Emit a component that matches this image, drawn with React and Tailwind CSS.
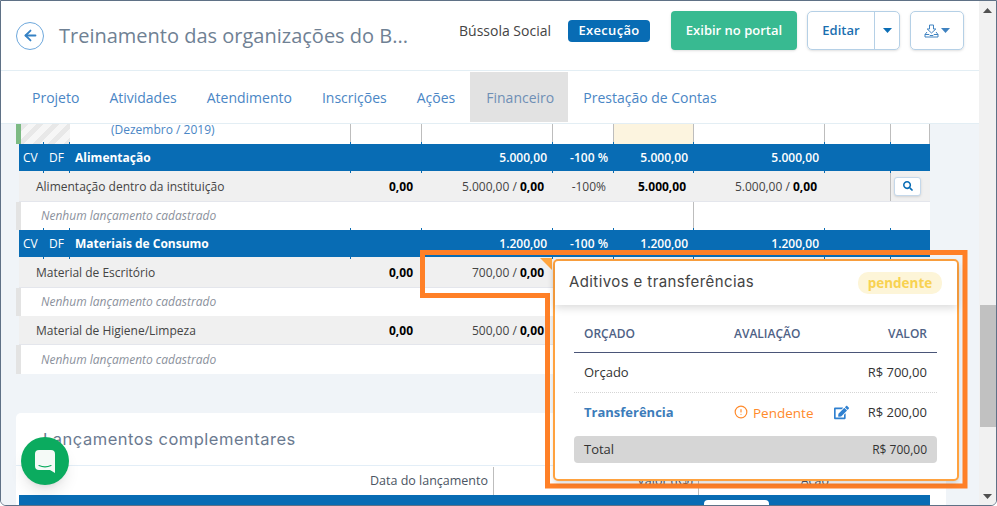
import { ArrowLeft, CircleAlert } from "lucide-react";
import { FaSearch, FaEdit } from "react-icons/fa";

const cols = "grid grid-cols-[24px_26px_281px_71px_131px_61px_80px_131px_66px_40px]";
const montserrat = "font-['Inter','Noto_Sans',sans-serif]";

const tabs = ["Projeto", "Atividades", "Atendimento", "Inscrições", "Ações", "Financeiro", "Prestação de Contas"];
const ticks = [24, 50, 331, 402, 533, 594, 674, 805, 871];

function Caret({ className }) {
  return (
    <svg width="9" height="5" viewBox="0 0 9 5" className={className}>
      <path d="M0 0h9L4.5 5z" fill="currentColor" />
    </svg>
  );
}

function GroupRow({ name, vals }) {
  return (
    <div className="relative z-[1] pl-[3px]">
      <div className={`${cols} relative h-[27px] items-center bg-[#086cb4] text-xs text-white`}>
        <span className="pl-[4px]">CV</span>
        <span className="pl-[6px]">DF</span>
        <span className="pl-[6px] font-bold">{name}</span>
        <span />
        <span className="pr-[5px] text-right font-semibold">{vals}</span>
        <span className="pr-[5px] text-right font-semibold">-100 %</span>
        <span className="pr-[5px] text-right font-semibold">{vals}</span>
        <span className="pr-[5px] text-right font-semibold">{vals}</span>
        <span />
        <span />
        {ticks.map((x) => (
          <span key={x} className="absolute -top-[2px] h-[31px] w-px bg-[#086cb4]" style={{ left: x }} />
        ))}
      </div>
    </div>
  );
}

function DataRow({ name, value, total, search, h = "h-[31px]" }) {
  return (
    <div className="pl-[3px]">
      <div className={`${cols} ${h} items-center bg-[#f0f0f0] text-xs text-[#444] border-b border-[#e4e6ec]`}>
        <span className="col-span-3 pl-[17px] pt-[1px]">{name}</span>
        <span className="pr-[8px] pt-[1px] text-right font-bold text-black">0,00</span>
        <span className="pr-[8px] pt-[1px] text-right">
          {value} / <b className="text-black">0,00</b>
        </span>
        <span className="pr-[7px] pt-[1px] text-right">-100%</span>
        <span className="pr-[7px] pt-[1px] text-right font-bold text-black">{total}</span>
        <span className="pr-[7px] pt-[1px] text-right">
          {value} / <b className="text-black">0,00</b>
        </span>
        <span />
        <span className="flex h-full items-center border-l border-[#bdbdbd] pl-[3px]">
          {search && (
            <span className="flex h-[19px] w-[27px] items-center justify-center rounded-[3px] border border-[#c5d8ea] bg-white text-[#0a6db5] shadow-sm">
              <FaSearch size={10} />
            </span>
          )}
        </span>
      </div>
    </div>
  );
}

function EmptyRow({ line, h = "h-[28px]" }) {
  return (
    <div className={`${h} relative flex items-center border-l-[5px] border-[#e3e3e3] bg-white text-xs italic text-[#8b919c]`}>
      <span className="pl-[20px]">Nenhum lançamento cadastrado</span>
      {line && <span className="absolute left-[672px] top-0 h-full w-px bg-[#bdbdbd]" />}
    </div>
  );
}

export default function App() {
  return (
    <div className="relative flex h-[506px] w-[997px] overflow-hidden rounded-b-md border border-[#5f7186] bg-white font-['Open_Sans',sans-serif]">
      <div className="flex w-[978px] flex-col">
        {/* topo */}
        <header className="flex h-[70px] shrink-0 items-center border-b border-[#e3eef4] bg-white pl-[15px] pr-[15px]">
          <span className="flex h-[28px] w-[28px] shrink-0 items-center justify-center rounded-full border border-[#6ea8dc] text-[#3581c4]">
            <ArrowLeft size={17} strokeWidth={2.6} />
          </span>
          <h1 className="ml-[15px] w-[352px] whitespace-nowrap text-[20px] leading-none text-[#6f8194]">Treinamento das organizações do B...</h1>
          <div className="mb-[10px] flex items-center">
            <span className="ml-[48px] text-[14px] text-[#444]">Bússola Social</span>
            <span className="ml-[17px] flex h-[22px] w-[82px] items-center justify-center rounded-[4px] bg-[#086cb4] text-[13px] font-semibold tracking-[0.3px] text-white">Execução</span>
            <button className="ml-[21px] h-[39px] w-[126px] rounded-[4px] bg-[#38ba91] text-[13px] font-semibold text-white shadow-sm">Exibir no portal</button>
            <div className="ml-[10px] flex h-[39px] w-[93px] rounded-[5px] border border-[#b5d0e6] shadow-sm">
              <span className="flex w-[67px] items-center justify-center border-r border-[#b5d0e6] text-[13px] font-semibold text-[#1b6fb0]">Editar</span>
              <span className="flex flex-1 items-center justify-center text-[#0a6db5]"><Caret /></span>
            </div>
            <div className="ml-[10px] flex h-[39px] w-[54px] items-center justify-center gap-[2px] rounded-[5px] border border-[#b5d0e6] text-[#3f82c0] shadow-sm">
              <svg width="15" height="14" viewBox="0 0 15 14" fill="none" stroke="currentColor" strokeWidth="1">
                <path d="M5.5 1h4v4h2.3L7.5 9 3.2 5h2.3z" />
                <path d="M3 8 1 10.5V13h13v-2.5L12 8M1 10.5h4l1 1h3l1-1h4" />
              </svg>
              <Caret />
            </div>
          </div>
        </header>

        {/* abas */}
        <nav className="flex h-[53px] shrink-0 items-center border-b border-[#e3eef4] bg-white pl-[16px] text-[14px] text-[#4a86c5]">
          {tabs.map((t) => (
            <span key={t} className={t === "Financeiro" ? "flex h-[50px] items-center bg-[#e2e2e2] pl-[16px] pr-[14px] text-[#6f8fb5]" : "flex h-[50px] items-center px-[15px]"}>
              {t}
            </span>
          ))}
        </nav>

        {/* conteudo */}
        <main className="flex-1 overflow-hidden bg-[#f0f4f8] pl-[15px] pr-[33px]">
          <div className="w-[914px]">
            <div className="flex h-[20px] bg-white">
              <span className="w-[5px] bg-[#7cba83]" />
              <span className="w-[49px] bg-[repeating-linear-gradient(135deg,#e8e8e8_0_5px,#f6f6f6_5px_11px)]" />
              <span className="w-[280px] whitespace-nowrap pl-[41px] text-xs leading-[12px] text-[#4a86c5]">(Dezembro / 2019)</span>
              <span className="w-[71px] border-l border-[#bdbdbd]" />
              <span className="w-[131px] border-l border-[#bdbdbd]" />
              <span className="w-[61px] border-l border-[#bdbdbd]" />
              <span className="w-[80px] border-l border-[#bdbdbd] bg-[#fcf4df]" />
              <span className="w-[131px] border-l border-[#bdbdbd]" />
              <span className="w-[66px] border-l border-[#bdbdbd]" />
              <span className="w-[40px] border-x border-[#bdbdbd]" />
            </div>
            <GroupRow name="Alimentação" vals="5.000,00" />
            <DataRow name="Alimentação dentro da instituição" value="5.000,00" total="5.000,00" search />
            <EmptyRow line />
            <GroupRow name="Materiais de Consumo" vals="1.200,00" />
            <DataRow name="Material de Escritório" value="700,00" total="700,00" />
            <EmptyRow />
            <DataRow name="Material de Higiene/Limpeza" value="500,00" total="500,00" h="h-[29px]" />
            <EmptyRow h="h-[29px]" />
          </div>

          <section className="mt-[39px] w-[930px] rounded-t-[5px] bg-white">
            <h2 className={`${montserrat} flex h-[53px] items-center border-b border-[#e3eef7] pl-[27px] text-[16.5px] tracking-[0.5px] text-[#6b7a90]`}>Lançamentos complementares</h2>
            <div className="flex h-[29px] w-[914px] pt-[1px] text-[12.5px] text-[#4b5563]">
              <span className="flex w-[478px] items-center justify-end border-r border-[#bdbdbd] pr-[5px]">Data do lançamento</span>
              <span className="flex w-[205px] items-center justify-end border-r border-[#bdbdbd] pr-[5px]">Valor (R$)</span>
              <span className="flex w-[130px] items-center justify-end">Ação</span>
            </div>
            <div className="ml-[3px] flex h-[12px] w-[911px] bg-[#086cb4] pl-[685px] pt-[5px]">
              <span className="h-[7px] w-[65px] rounded-t-[4px] bg-white" />
            </div>
          </section>
        </main>
      </div>

      {/* barra de rolagem */}
      <div className="flex w-[17px] flex-col bg-[#f1f1f1]">
        <div className="flex h-[17px] items-center justify-center pt-[2px] text-[#505050]"><Caret className="rotate-180" /></div>
        <div className="ml-[1px] mt-[287px] h-[122px] bg-[#c1c1c1]" />
        <div className="mt-auto flex h-[17px] items-center justify-center text-[#505050]"><Caret /></div>
      </div>

      {/* marca laranja da anotacao */}
      <svg className="pointer-events-none absolute -left-px -top-px z-10" width="997" height="506" fill="none">
        <path d="M422.5 252.5H965V486H547.5V295.5H422.5Z" stroke="#ff8027" strokeWidth="5" />
      </svg>
      <span className="absolute left-[539px] top-[257px] z-10 h-0 w-0 border-l-[12px] border-t-[12px] border-l-transparent border-t-[#ffa53f]" />

      {/* popover */}
      <div className="absolute left-[552px] top-[258px] z-20 h-[222px] w-[406px] rounded-[5px] border-2 border-[#ffa23f] bg-white shadow-md">
        <div className="flex h-[44px] items-center justify-between pl-[14px] pr-[15px] shadow-[0_3px_8px_rgba(0,0,0,0.14)]">
          <span className={`${montserrat} -mt-[2px] text-[15px] tracking-[0.4px] text-[#444]`}>Aditivos e transferências</span>
          <span className="flex h-[22px] w-[84px] items-center justify-center rounded-[10px] bg-[#fdf5d8] text-[13.5px] font-bold text-[#f8d250]">pendente</span>
        </div>
        <div className="pl-[19px] pr-[20px] pt-[11px] text-xs">
          <div className="flex h-[37px] items-center border-b border-[#4a5578] pl-[10px] pr-[10px] font-semibold text-[#4f6286]">
            <span className="w-[150px]">ORÇADO</span>
            <span className="flex-1">AVALIAÇÃO</span>
            <span>VALOR</span>
          </div>
          <div className="flex h-[40px] items-center justify-between border-b border-dotted border-[#d5d5d5] pl-[10px] pr-[10px] text-[13px] text-[#333]">
            <span>Orçado</span>
            <span>R$ 700,00</span>
          </div>
          <div className="flex h-[39px] items-center pl-[10px] pr-[10px]">
            <span className="w-[150px] text-[13px] font-bold text-[#3c7cba]">Transferência</span>
            <span className="flex w-[100px] items-center gap-[5px] text-[13.5px] text-[#ff8a2b]">
              <CircleAlert size={14} />
              Pendente
            </span>
            <FaEdit size={15} className="text-[#2f80d0]" />
            <span className="ml-auto text-[13px] text-[#333]">R$ 200,00</span>
          </div>
          <div className="mt-[4px] flex h-[27px] items-center justify-between rounded-[4px] bg-[#d6d6d6] pl-[10px] pr-[10px] text-[#333]">
            <span className="text-[13px]">Total</span>
            <span>R$ 700,00</span>
          </div>
        </div>
      </div>

      {/* botao de chat */}
      <div className="absolute left-[20px] top-[436px] z-30 flex h-[48px] w-[48px] items-center justify-center rounded-full bg-[#0bab5f] shadow-lg">
        <svg width="22" height="25" viewBox="0 0 22 25">
          <path d="M5 1h12a4 4 0 0 1 4 4v19l-5-3H5a4 4 0 0 1-4-4V5a4 4 0 0 1 4-4z" fill="#f5faf7" />
          <path d="M5 16.5c3.5 1.6 8.5 1.6 12 0" fill="none" stroke="#0bab5f" strokeWidth="1.2" strokeLinecap="round" />
        </svg>
      </div>
    </div>
  );
}
